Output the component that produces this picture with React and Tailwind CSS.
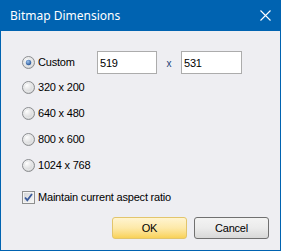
import {useState} from "react";

function Radio({checked}) {
    return (
        <svg width="13" height="13" viewBox="0 0 13 13" className="shrink-0">
            <defs>
                <radialGradient id="rbg" cx="0.35" cy="0.3" r="0.8">
                    <stop offset="0" stopColor="#ffffff"/>
                    <stop offset="1" stopColor="#c9cacc"/>
                </radialGradient>
                <radialGradient id="rdot" cx="0.4" cy="0.35" r="0.7">
                    <stop offset="0" stopColor="#9fc3ee"/>
                    <stop offset="1" stopColor="#1f4f92"/>
                </radialGradient>
            </defs>
            <circle cx="6.5" cy="6.5" r="6" fill="url(#rbg)" stroke="#8b8d90"/>
            <circle cx="6.5" cy="6.5" r="4.3" fill="none" stroke="#e8e9ea"/>
            {checked && <circle cx="6.5" cy="6.5" r="2.7" fill="url(#rdot)"/>}
        </svg>
    )
}

function Check() {
    return (
        <svg width="13" height="13" viewBox="0 0 13 13" className="shrink-0">
            <defs>
                <linearGradient id="cbg" x1="0" y1="0" x2="1" y2="1">
                    <stop offset="0" stopColor="#d5d6d8"/>
                    <stop offset="1" stopColor="#f6f6f6"/>
                </linearGradient>
            </defs>
            <rect x="0.5" y="0.5" width="12" height="12" fill="#f4f4f4" stroke="#8e8f8f"/>
            <rect x="2" y="2" width="9" height="9" fill="url(#cbg)"/>
            <path d="M3 6.5 L5.3 9.2 L10 3" fill="none" stroke="#3a5a9c" strokeWidth="1.8"/>
        </svg>
    )
}

export default function App() {
    const [size, setSize] = useState('custom')
    const presets = ['320 x 200', '640 x 480', '800 x 600', '1024 x 768']

    return (
        <div className="w-[281px] h-[251px] flex flex-col bg-[#0063b1] text-[11px] tracking-[-0.2px] text-black"
             style={{fontFamily: '"Liberation Sans", Arial, sans-serif'}}>
            <div className="h-[31px] shrink-0 flex items-center justify-between pl-[10px] pr-[10px] text-white tracking-normal">
                <span className="text-[12px]" style={{fontFamily: '"Noto Sans", "Open Sans", sans-serif'}}>Bitmap Dimensions</span>
                <svg width="11" height="11" viewBox="0 0 11 11">
                    <path d="M0.5 0.5 L10.5 10.5 M10.5 0.5 L0.5 10.5" stroke="#fff" strokeWidth="1.1"/>
                </svg>
            </div>
            <div className="flex-1 mx-[1px] mb-[1px] bg-[#eeeef2] flex flex-col pl-[21px] pr-[11px]">
                <div className="flex items-center h-[23px] mt-[20px]">
                    <label className="flex items-center w-[75px]" onClick={() => setSize('custom')}>
                        <Radio checked={size === 'custom'}/>
                        <span className="ml-[3px]">Custom</span>
                    </label>
                    <input defaultValue="519"
                           className="w-[60px] h-[23px] border border-[#acacac] bg-white px-[2px] outline-none"/>
                    <span className="w-[24px] text-center text-[10px] pt-[2px] text-[#1c3f78]">x</span>
                    <input defaultValue="531"
                           className="w-[61px] h-[23px] border border-[#acacac] bg-white px-[2px] outline-none"/>
                </div>
                {presets.map(p => (
                    <label key={p} className="flex items-center h-[26px]" onClick={() => setSize(p)}>
                        <Radio checked={size === p}/>
                        <span className="ml-[3px]">{p}</span>
                    </label>
                ))}
                <label className="flex items-center h-[26px] mt-[6px]">
                    <Check/>
                    <span className="ml-[3px]">Maintain current aspect ratio</span>
                </label>
                <div className="flex justify-end gap-[7px] mt-[7px]">
                    <button
                        className="w-[75px] h-[22px] rounded-[3px] border border-[#e2c56c] bg-gradient-to-b from-[#fff4d0] via-[#fde9a8] to-[#f9d256]">
                        OK
                    </button>
                    <button
                        className="w-[75px] h-[22px] rounded-[3px] border border-[#707070] bg-gradient-to-b from-[#f3f3f3] via-[#ebebeb] to-[#d8d8d8]">
                        Cancel
                    </button>
                </div>
            </div>
        </div>
    )
}
